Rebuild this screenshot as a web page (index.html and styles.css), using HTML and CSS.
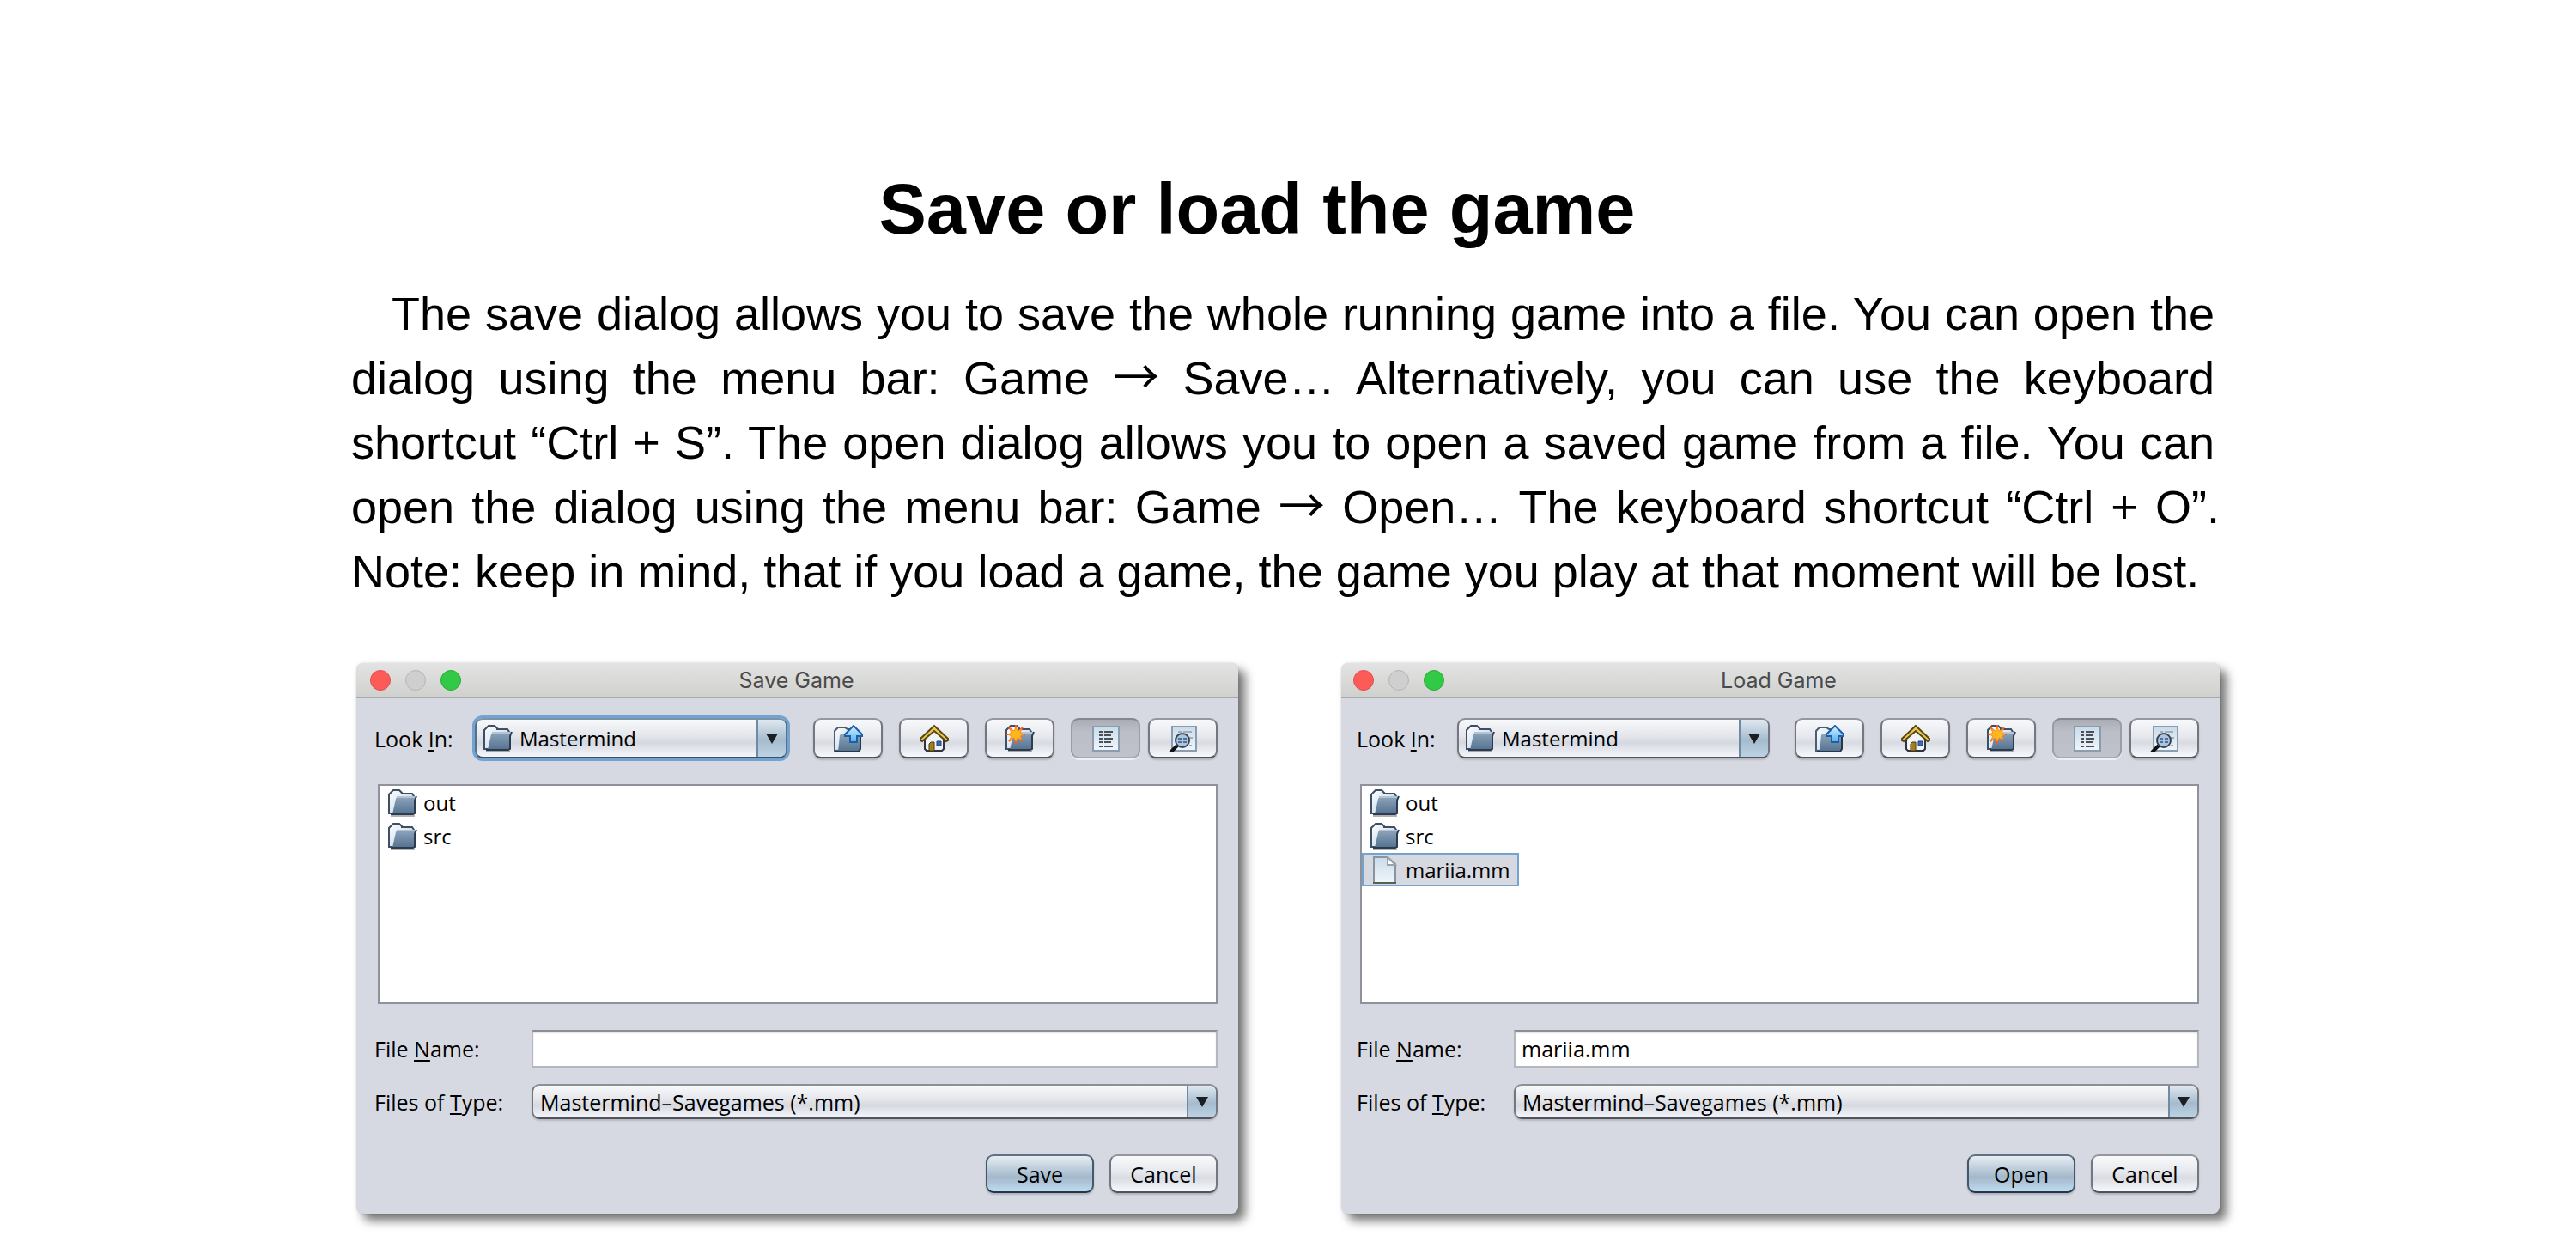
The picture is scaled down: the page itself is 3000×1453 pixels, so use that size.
FILE: index.html
```
<!DOCTYPE html>
<html lang="en">
<head>
<meta charset="utf-8">
<title>Save or load the game</title>
<link rel="stylesheet" href="styles.css">
</head>
<body>
<svg class="defs" width="0" height="0" aria-hidden="true">
  <defs>
    <linearGradient id="front" x1="0" y1="0" x2="0" y2="1"><stop offset="0" stop-color="#8fa6bd"/><stop offset="1" stop-color="#54718f"/></linearGradient>
    <linearGradient id="back" x1="0" y1="0" x2="1" y2="1"><stop offset="0" stop-color="#fff"/><stop offset="1" stop-color="#b9cde2"/></linearGradient>
    <linearGradient id="arrow" x1="0" y1="0" x2="0" y2="1"><stop offset="0" stop-color="#d4f1ff"/><stop offset="1" stop-color="#4fb0f2"/></linearGradient>
    <linearGradient id="paper" x1="0" y1="0" x2="0" y2="1"><stop offset="0" stop-color="#c9dbe9"/><stop offset="1" stop-color="#f1f6fa"/></linearGradient>
  </defs>
  <symbol id="folder" viewBox="0 0 34 32">
    <path d="M3 31h28" stroke="#000" stroke-opacity=".3" stroke-width="2"/>
    <path d="M1 28V6l5-5h7l3 3v1h12l2 3v20z" fill="url(#back)" stroke="#3d4f64" stroke-width="2"/>
    <path d="M5 29 9 11l2-3h22l-2 5v14l-2 2z" fill="url(#front)"/>
    <path d="M10 9h22" stroke="#b3c4d4" stroke-width="2"/>
    <path d="M33 8l-2 5v15l-2 1H3" fill="none" stroke="#2b3c50" stroke-width="2"/>
  </symbol>
  <symbol id="file" viewBox="0 0 34 32">
    <path d="M4 1h16l9 8v22H4z" fill="url(#paper)" stroke="#8b93a0" stroke-width="2"/>
    <path d="M20 1v9h9z" fill="#fff" stroke="#98a3b0" stroke-width="2"/>
    <path d="M3 31h27" stroke="#56614f" stroke-width="2"/>
  </symbol>
  <symbol id="up" viewBox="0 0 34 32">
    <path d="M1 30V7l4-4h8l3 2h8v24z" fill="url(#back)" stroke="#4a5d72" stroke-width="2"/>
    <path d="M5 31 7 12l2-2h23l-2 19-2 2z" fill="url(#front)"/>
    <path d="M2 31h27l2-3V10" fill="none" stroke="#24384c" stroke-width="2"/>
    <path d="M23 1l10 10v2h-6v7h-8v-7h-6v-2z" fill="url(#arrow)" stroke="#1c5fa8" stroke-width="2"/>
  </symbol>
  <symbol id="home" viewBox="0 0 34 32">
    <path d="M6 15 17 5l11 10v13l-2 2H8l-2-2z" fill="#f1f3f8" stroke="#2e3440" stroke-width="2"/>
    <path d="M11 30V22l2-2h4v10z" fill="#a08020" stroke="#4c3c08" stroke-width="1"/>
    <path d="M20 19h5v5h-5z" fill="#3f6cb0" stroke="#1f3f78" stroke-width="1"/>
    <path d="M17 1 1 16v2l2 1L17 7l14 12 2-1v-2z" fill="#e8cb55" stroke="#5a4710" stroke-width="2"/>
  </symbol>
  <symbol id="new" viewBox="0 0 34 32">
    <use href="#folder"/>
    <path d="M12 0v22M1 11h22M4 3l16 16M20 3 4 19" stroke="#ff5a1c" stroke-width="2"/>
    <path d="M12 3l2 4 5-2-2 4 4 2-4 2 2 4-5-2-2 4-2-4-5 2 2-4-4-2 4-2-2-4 5 2z" fill="#ffb81a" stroke="#ff8a1c" stroke-width="1"/>
  </symbol>
  <symbol id="list" viewBox="0 0 34 32">
    <path d="M2 2h30v28H2z" fill="url(#paper)" stroke="#8a9cb0" stroke-width="2"/>
    <path d="M9 8h4m2 0h10M9 12h4m2 0h8M9 16h4m2 0h10M9 20h4m2 0h8M9 25h4m2 0h10" stroke="#4a4f58" stroke-width="2"/>
  </symbol>
  <symbol id="details" viewBox="0 0 34 32">
    <path d="M4 2h28v28H4z" fill="url(#paper)" stroke="#8a9cb0" stroke-width="2"/>
    <path d="M11 8h4m2 0h10M24 15h4M24 24h3" stroke="#a3adb8" stroke-width="2"/>
    <path d="M2 32l8-8" stroke="#111" stroke-width="4"/>
    <circle cx="16" cy="18" r="8" fill="#a9c6e4" stroke="#39424e" stroke-width="2"/>
    <path d="M11 16h4m2 0h4M11 20h4m2 0h4" stroke="#55708f" stroke-width="2"/>
  </symbol>
</svg>
<main class="slide">
  <h1 class="title">Save or load the game</h1>
  <p class="intro">
    <span class="line line--first">The save dialog allows you to save the whole running game into a file. You can open the</span>
    <span class="line">dialog using the menu bar: Game <span class="arrow">→</span> Save… Alternatively, you can use the keyboard</span>
    <span class="line">shortcut “Ctrl + S”. The open dialog allows you to open a saved game from a file. You can</span>
    <span class="line line--wide">open the dialog using the menu bar: Game <span class="arrow">→</span> Open… The keyboard shortcut “Ctrl + O”.</span>
    <span class="line line--last">Note: keep in mind, that if you load a game, the game you play at that moment will be lost.</span>
  </p>
  <div class="dialogs">
    <section class="dialog" aria-labelledby="save-title">
      <header class="bar">
        <div class="lights"><button class="light light--close" aria-label="Close"></button><button class="light" aria-label="Minimize" disabled></button><button class="light light--zoom" aria-label="Zoom"></button></div>
        <h2 class="bar-title" id="save-title">Save Game</h2>
      </header>
      <form class="body">
        <div class="look">
          <label class="look-label" for="save-look">Look <u>I</u>n:</label>
          <div class="combo combo--icon combo--focus"><select id="save-look"><option>Mastermind</option></select><svg class="icon combo-icon"><use href="#folder"/></svg><span class="combo-arrow"></span></div>
          <div class="tools">
            <button type="button" class="btn tool" aria-label="Up one level"><svg class="icon"><use href="#up"/></svg></button>
            <button type="button" class="btn tool" aria-label="Home"><svg class="icon"><use href="#home"/></svg></button>
            <button type="button" class="btn tool" aria-label="New folder"><svg class="icon"><use href="#new"/></svg></button>
            <div class="views">
              <button type="button" class="btn tool tool--on" aria-label="List" aria-pressed="true"><svg class="icon"><use href="#list"/></svg></button>
              <button type="button" class="btn tool" aria-label="Details"><svg class="icon"><use href="#details"/></svg></button>
            </div>
          </div>
        </div>
        <ul class="files">
          <li class="file"><svg class="icon"><use href="#folder"/></svg>out</li>
          <li class="file"><svg class="icon"><use href="#folder"/></svg>src</li>
        </ul>
        <div class="fields">
          <label for="save-name">File <u>N</u>ame:</label>
          <input class="name" id="save-name" type="text">
          <label for="save-type">Files of <u>T</u>ype:</label>
          <div class="combo"><select id="save-type"><option>Mastermind–Savegames (*.mm)</option></select><span class="combo-arrow"></span></div>
        </div>
        <div class="actions">
          <button type="button" class="btn btn--main">Save</button>
          <button type="button" class="btn">Cancel</button>
        </div>
      </form>
    </section>
    <section class="dialog dialog--load" aria-labelledby="load-title">
      <header class="bar">
        <div class="lights"><button class="light light--close" aria-label="Close"></button><button class="light" aria-label="Minimize" disabled></button><button class="light light--zoom" aria-label="Zoom"></button></div>
        <h2 class="bar-title" id="load-title">Load Game</h2>
      </header>
      <form class="body">
        <div class="look">
          <label class="look-label" for="load-look">Look <u>I</u>n:</label>
          <div class="combo combo--icon"><select id="load-look"><option>Mastermind</option></select><svg class="icon combo-icon"><use href="#folder"/></svg><span class="combo-arrow"></span></div>
          <div class="tools">
            <button type="button" class="btn tool" aria-label="Up one level"><svg class="icon"><use href="#up"/></svg></button>
            <button type="button" class="btn tool" aria-label="Home"><svg class="icon"><use href="#home"/></svg></button>
            <button type="button" class="btn tool" aria-label="New folder"><svg class="icon"><use href="#new"/></svg></button>
            <div class="views">
              <button type="button" class="btn tool tool--on" aria-label="List" aria-pressed="true"><svg class="icon"><use href="#list"/></svg></button>
              <button type="button" class="btn tool" aria-label="Details"><svg class="icon"><use href="#details"/></svg></button>
            </div>
          </div>
        </div>
        <ul class="files">
          <li class="file"><svg class="icon"><use href="#folder"/></svg>out</li>
          <li class="file"><svg class="icon"><use href="#folder"/></svg>src</li>
          <li class="file file--selected"><svg class="icon"><use href="#file"/></svg>mariia.mm</li>
        </ul>
        <div class="fields">
          <label for="load-name">File <u>N</u>ame:</label>
          <input class="name" id="load-name" type="text" value="mariia.mm">
          <label for="load-type">Files of <u>T</u>ype:</label>
          <div class="combo"><select id="load-type"><option>Mastermind–Savegames (*.mm)</option></select><span class="combo-arrow"></span></div>
        </div>
        <div class="actions">
          <button type="button" class="btn btn--main">Open</button>
          <button type="button" class="btn">Cancel</button>
        </div>
      </form>
    </section>
  </div>
</main>
</body>
</html>
```
FILE: styles.css
```
* { box-sizing: border-box; }

body {
  margin: 0;
  background: #fff;
  color: #000;
  font-family: "Liberation Sans", Arial, sans-serif;
}

.defs { position: absolute; }

.slide { padding: 192px 415px 32px; }

.title {
  margin: 0 72px 0 0;
  font-size: 83px;
  line-height: 104px;
  text-align: center;
}

.intro {
  margin: 32px 6px 69px -6px;
  font-size: 54px;
  line-height: 75px;
}

.line {
  display: block;
  text-align: justify;
  text-align-last: justify;
  white-space: nowrap;
}
.line--first { padding-left: 47px; }
.line--wide { margin-right: -6px; }
.line--last { text-align-last: left; }

.arrow { font-family: "Noto Sans CJK JP", sans-serif; line-height: 1; }

.dialogs {
  display: grid;
  grid-template-columns: 1027fr 1023fr;
  gap: 120px;
}

.dialog {
  border-radius: 8px;
  background: #d6d9e1;
  box-shadow: 8px 8px 12px rgba(0, 0, 0, .55), 0 0 3px rgba(0, 0, 0, .12);
  font: 500 25px/32px "Open Sans", "Noto Sans", sans-serif;
}

.bar {
  display: grid;
  grid-template-columns: 1fr auto 1fr;
  align-items: center;
  height: 41px;
  padding: 0 18px 0 16px;
  border-bottom: 1px solid #a9a9ab;
  border-radius: 8px 8px 0 0;
  background: linear-gradient(#e3e3e3, #d0d0ce);
}
.dialog--load .bar { padding-left: 14px; }

.bar-title {
  margin: 0;
  color: #4a4a4a;
  font: 400 25px/32px Inter, sans-serif;
}

.lights { display: flex; gap: 17px; }

.light {
  width: 24px;
  height: 24px;
  padding: 0;
  border: 1px solid #b5b5b5;
  border-radius: 50%;
  background: #cfcfcf;
}
.light--close { border-color: #e2504c; background: #fc5b57; }
.light--zoom { border-color: #28ac36; background: #32c946; }

.body { padding: 23px 24px 24px 21px; }
.dialog--load .body { padding-left: 18px; }

.look { display: flex; align-items: center; }
.look-label { width: 117px; }

u { text-underline-offset: 3px; text-decoration-thickness: 2px; text-decoration-skip-ink: none; }

.combo {
  display: grid;
  grid-template-columns: 1fr 34px;
  height: 41px;
  border: 2px solid #6a6d74;
  border-color: #8d9097 #74777f #50535b;
  border-radius: 9px;
  overflow: hidden;
  background: linear-gradient(#f8f9fb, #e3e5ea 45%, #d5d8df 62%, #f4f6fb);
  box-shadow: 0 2px 2px rgba(0, 0, 0, .15);
}

.combo select {
  grid-area: 1 / 1 / 2 / 3;
  min-width: 0;
  padding: 0 40px 0 8px;
  border: 0;
  outline: 0;
  appearance: none;
  background: none;
  color: #000;
  font: inherit;
}

.combo-arrow {
  grid-area: 1 / 2;
  display: grid;
  place-items: center;
  border-left: 2px solid #6f8aa4;
  background: linear-gradient(#dfe8ef, #a5bbcd 55%, #bcd3e6);
  pointer-events: none;
}
.combo-arrow::before {
  content: "";
  border: 7px solid transparent;
  border-top: 12px solid #1b1f24;
  border-bottom: 0;
}

.combo--icon { width: 364px; height: 47px; font-size: 24px; }
.combo--icon select { padding-left: 50px; }
.combo-icon { grid-area: 1 / 1; align-self: center; margin-left: 8px; pointer-events: none; }
.combo--focus { box-shadow: 0 0 0 3px #73a4d1; border-color: #7a93ad #55708c #3c5168; }

.icon { display: block; width: 34px; height: 32px; flex: none; }

.tools { display: flex; gap: 19px; margin-left: auto; }
.views { display: flex; gap: 9px; }

.btn {
  width: 126px;
  height: 45px;
  padding: 0;
  border: 2px solid #6a6d74;
  border-color: #94979e #74777f #50535b;
  border-radius: 9px;
  background: linear-gradient(#f8f9fb, #e6e8ed 45%, #d8dbe2 62%, #f8f9fd);
  box-shadow: 0 2px 2px rgba(0, 0, 0, .18);
  color: #000;
  font: inherit;
}
.btn--main {
  border-color: #5f7183 #43586c #22354a;
  background: linear-gradient(#e6edf3, #a3b8ca 60%, #bfdaf0);
}
.tool { display: grid; place-items: center; width: 81px; height: 47px; }
.tool--on {
  border-color: #84878f #9a9da5 #a6a9b1;
  background: linear-gradient(#a9acb4, #bbbec6 30%, #bfc2ca);
  box-shadow: 0 2px 0 #eef0f4;
}

.files {
  height: 256px;
  margin: 30px 0 30px 4px;
  padding: 0;
  border: 2px solid #8f929b;
  background: #fff;
  font-size: 24px;
  list-style: none;
}

.file {
  display: flex;
  align-items: center;
  gap: 7px;
  width: max-content;
  height: 39px;
  padding: 0 10px;
  border: 0 solid #73a4d1;
}
.file--selected { padding: 0 8px; border-width: 2px; background: #d6d9df; }

.fields {
  display: grid;
  grid-template-columns: 183px 1fr;
  grid-template-rows: 44px 41px;
  row-gap: 19px;
  align-items: center;
}

.name {
  width: 100%;
  height: 44px;
  padding: 0 7px;
  border: 2px solid #b4b7bd;
  border-top-color: #8a8d94;
  background: #fff;
  box-shadow: inset 0 2px 2px rgba(0, 0, 0, .12);
  color: #000;
  font: inherit;
  outline: 0;
}

.actions {
  display: flex;
  justify-content: flex-end;
  gap: 18px;
  margin-top: 41px;
}
```
